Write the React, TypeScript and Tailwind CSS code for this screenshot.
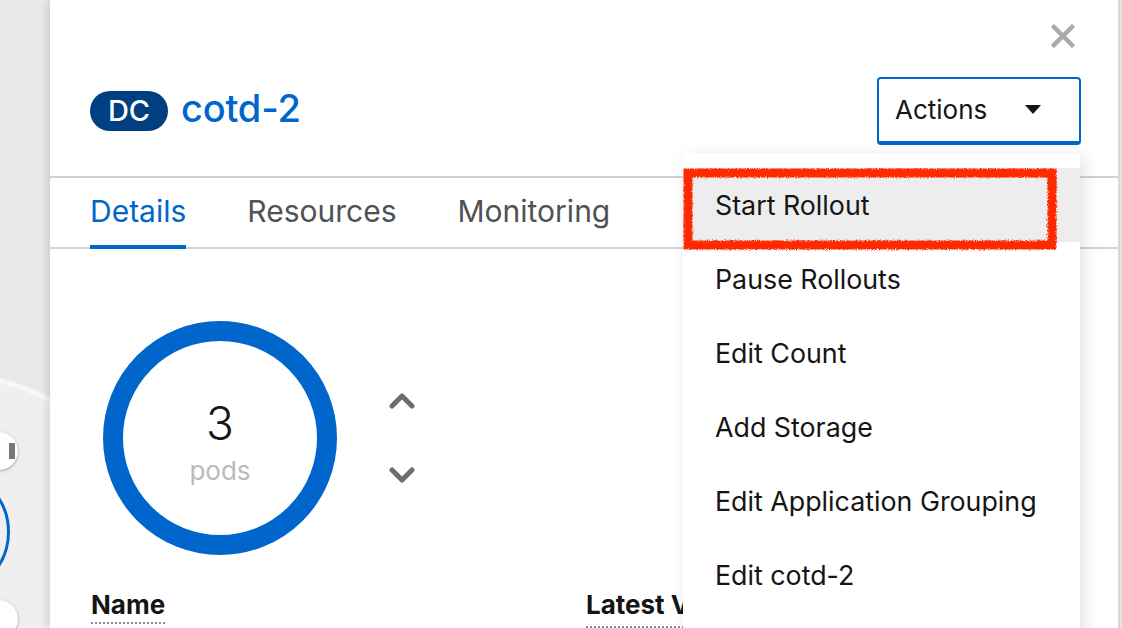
import React from "react";

const font = { fontFamily: "Inter, 'Noto Sans', sans-serif" };

const menuItems = [
  "Start Rollout",
  "Pause Rollouts",
  "Edit Count",
  "Add Storage",
  "Edit Application Grouping",
  "Edit cotd-2",
];

const tabs = ["Details", "Resources", "Monitoring"];

function TopologyEdge() {
  return (
    <div className="relative w-[50px] h-full bg-[#e9e9e9] overflow-hidden">
      {/* group circle of the topology canvas */}
      <div className="absolute left-[-260px] top-[372px] w-[420px] h-[420px] rounded-full border-[5px] border-[#f7f7f7] bg-[#efefef]" />
      {/* node ring */}
      <div className="absolute left-[-120px] top-[468px] w-[130px] h-[128px] rounded-full border-[3px] border-[#0066cc]" />
      {/* node badges */}
      <div className="absolute left-[-20px] top-[432px] w-[38px] h-[38px] rounded-full bg-white shadow-[0_1px_3px_rgba(0,0,0,0.35)] flex items-center justify-end pr-[3px]">
        <div className="w-[6px] h-[16px] bg-[#777]" />
      </div>
      <div className="absolute left-[-20px] top-[600px] w-[38px] h-[38px] rounded-full bg-white shadow-[0_1px_3px_rgba(0,0,0,0.35)]" />
    </div>
  );
}

// hand-drawn looking highlight marker around the first menu entry
function Scribble() {
  return (
    <svg className="absolute left-0 top-0" width="376" height="84" viewBox="0 0 376 84">
      <defs>
        <filter id="rough" x="-5%" y="-10%" width="110%" height="120%">
          <feTurbulence type="fractalNoise" baseFrequency="0.9" numOctaves="2" seed="4" />
          <feDisplacementMap in="SourceGraphic" scale="4" />
        </filter>
      </defs>
      <rect x="5" y="5" width="364" height="72" fill="none" stroke="#ff2a00" strokeWidth="9" filter="url(#rough)" />
    </svg>
  );
}

function Dropdown() {
  return (
    <div className="absolute left-[633px] top-[153px] w-[397px] h-[500px] bg-white shadow-[4px_4px_16px_rgba(0,0,0,0.12)] pt-[15px]">
      {menuItems.map((item, i) => (
        <div
          key={item}
          className={`relative h-[74px] flex items-center pl-[32px] text-[26.8px] text-[#151515] ${
            i === 0 ? "bg-[#ededed]" : ""
          }`}
        >
          {item}
          {i === 0 && <Scribble />}
        </div>
      ))}
    </div>
  );
}

export default function App() {
  return (
    <div className="w-[1122px] h-[628px] overflow-hidden flex bg-[#e9e9e9]" style={font}>
      <TopologyEdge />

      <div className="relative w-[1070px] h-full bg-white border-r-2 border-[#d8d8d8] shadow-[-3px_0_8px_rgba(0,0,0,0.12)] flex flex-col">
        {/* close */}
        <div className="flex justify-end pt-[24px] pr-[43px] h-[76px]">
          <svg width="24" height="24" viewBox="0 0 24 24">
            <path d="M3 3 L21 21 M21 3 L3 21" stroke="#aaaaaa" strokeWidth="4.5" strokeLinecap="square" />
          </svg>
        </div>

        {/* title row */}
        <div className="flex items-center justify-between pl-[40px] pr-[37px] h-[70px]">
          <div className="flex items-center gap-[13px]">
            <span className="bg-[#004080] text-white rounded-full h-[40px] w-[78px] flex items-center justify-center text-[29px] font-medium">
              DC
            </span>
            <span className="text-[#0066cc] text-[38px] font-medium tracking-[-0.2px] -mt-[4px]">cotd-2</span>
          </div>
          <div className="w-[204px] h-[68px] border-2 border-b-[4px] border-[#0066cc] rounded-[4px] flex items-center justify-between pl-[16px] pr-[38px] text-[26px] text-[#151515]">
            Actions
            <svg width="16" height="10" viewBox="0 0 16 10">
              <path d="M0 0 H16 L8 9 Z" fill="#151515" />
            </svg>
          </div>
        </div>

        {/* spacer to tabs */}
        <div className="h-[31px]" />

        {/* tabs */}
        <div className="border-t-2 border-b-2 border-[#d2d2d2] h-[73px] flex items-end pl-[40px] gap-[61px]">
          {tabs.map((t, i) => (
            <div
              key={t}
              className={`h-full flex items-center text-[30px] pb-[3px] ${
                i === 0 ? "text-[#0066cc] border-b-[4px] border-[#0066cc] -mb-[2px]" : "text-[#4f5255]"
              }`}
            >
              {t}
            </div>
          ))}
        </div>

        {/* body */}
        <div className="flex items-center pl-[53px] pt-[72px] gap-[52px]">
          <div className="w-[234px] h-[234px] rounded-full border-[20px] border-[#0066cc] flex flex-col items-center justify-center pt-[10px]">
            <span className="text-[46px] leading-[48px] text-[#151515] font-light">3</span>
            <span className="text-[26px] leading-[32px] text-[#b8bbbe] mt-[8px]">pods</span>
          </div>
          <div className="flex flex-col gap-[58px]">
            <svg width="26" height="17" viewBox="0 0 26 17">
              <path d="M3 14 L13 4 L23 14" stroke="#6a6e73" strokeWidth="5" fill="none" strokeLinecap="round" strokeLinejoin="round" />
            </svg>
            <svg width="26" height="17" viewBox="0 0 26 17">
              <path d="M3 3 L13 13 L23 3" stroke="#6a6e73" strokeWidth="5" fill="none" strokeLinecap="round" strokeLinejoin="round" />
            </svg>
          </div>
        </div>

        <div className="flex pl-[41px] pt-[30px] text-[26px] font-bold text-[#151515]">
          <span className="w-[495px]">
            <span className="border-b-2 border-dotted border-[#8a8d90] pb-[2px]">Name</span>
          </span>
          <span className="border-b-2 border-dotted border-[#8a8d90] pb-[2px] whitespace-nowrap">Latest Version</span>
        </div>

        <Dropdown />
      </div>
    </div>
  );
}
